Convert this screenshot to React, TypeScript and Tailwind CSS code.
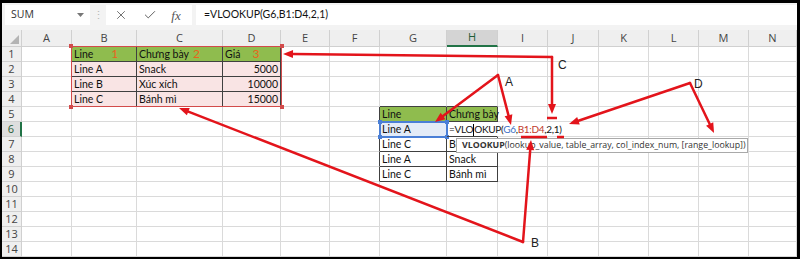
import React from "react";
import { X, Check } from "lucide-react";

const RED = "#e3141b";
const letters = ["A", "B", "C", "D", "E", "F", "G", "H", "I", "J", "K", "L", "M", "N"];
const rows = [1, 2, 3, 4, 5, 6, 7, 8, 9, 10, 11, 12, 13, 14];

type Cell = { t?: React.ReactNode; right?: boolean };

const data: Record<string, Cell> = {
  B1: { t: <>Line<span className="ml-[18px] text-[12px] text-[#e8641c]">1</span></> },
  C1: { t: <>Chưng bày<span className="ml-[4px] text-[12px] text-[#e8641c]">2</span></> },
  D1: { t: <>Giá<span className="ml-[12px] text-[12px] text-[#e8641c]">3</span></> },
  B2: { t: "Line A" },
  C2: { t: "Snack" },
  D2: { t: "5000", right: true },
  B3: { t: "Line B" },
  C3: { t: "Xúc xích" },
  D3: { t: "10000", right: true },
  B4: { t: "Line C" },
  C4: { t: "Bánh mì" },
  D4: { t: "15000", right: true },
  G5: { t: "Line" },
  H5: { t: "Chưng bày" },
  G6: { t: "Line A" },
  H6: {
    t: (
      <span className="text-[10px] tracking-[-0.3px]">
        =VLO<span className="inline-block w-0 h-[12px] border-l border-black align-middle" />OKUP(
        <span className="text-[#3b6fc6]">G6</span>,<span className="text-[#c0392b]">B1:D4</span>,2,1)
      </span>
    ),
  },
  G7: { t: "Line C" },
  H7: { t: <span className="inline-block w-[8px] overflow-hidden align-top">Bánh mì</span> },
  G8: { t: "Line A" },
  H8: { t: "Snack" },
  G9: { t: "Line C" },
  H9: { t: "Bánh mì" },
};

function cellClass(r: number, c: number) {
  const t1 = r >= 1 && r <= 4 && c >= 1 && c <= 3;
  const t2 = r >= 5 && r <= 9 && (c === 6 || c === 7);
  let rc = "border-r-[#dadada]";
  let bc = "border-b-[#dadada]";
  let bg = "";
  if (t1 || t2) {
    rc = "border-r-[#404040]";
    bc = "border-b-[#404040]";
  }
  if (c === 5 && r >= 5 && r <= 9) rc = "border-r-[#404040]";
  if (r === 4 && (c === 6 || c === 7)) bc = "border-b-[#404040]";
  if (r === 6 && (c === 7 || c === 8)) rc = "border-r-transparent";
  if ((t1 && r === 1) || (t2 && r === 5)) bg = "bg-[#8fbc4e]";
  else if (t1) bg = "bg-[#f9e4e4]";
  if (r === 6 && c === 6) bg = "bg-[#e3ebf7]";
  const z = r === 6 && c === 7 ? "relative z-10" : "";
  return `border-r border-b ${rc} ${bc} ${bg} ${z}`;
}

function head(x1: number, y1: number, x2: number, y2: number) {
  const L = 10;
  const W = 8;
  const dx = x2 - x1;
  const dy = y2 - y1;
  const d = Math.hypot(dx, dy);
  const ux = dx / d;
  const uy = dy / d;
  const bx = x2 - ux * L;
  const by = y2 - uy * L;
  const px = (-uy * W) / 2;
  const py = (ux * W) / 2;
  return { bx, by, pts: `${x2},${y2} ${bx + px},${by + py} ${bx - px},${by - py}` };
}

const arrows: [number, number, number, number][] = [
  [552, 57, 283, 54],
  [552, 57, 552, 114],
  [498, 75, 435, 122],
  [498, 75, 511, 125],
  [690, 83, 569, 124],
  [690, 83, 714, 133],
  [523, 242, 179, 108],
  [523, 242, 531, 140],
];

const marks: [number, number, number, number][] = [
  [547, 118, 557, 118],
  [521, 137, 547, 137],
  [557, 137, 564, 137],
];

const labels: [string, number, number][] = [
  ["A", 505, 86],
  ["C", 558, 69],
  ["D", 694, 88],
  ["B", 531, 247],
];

function FormulaBar() {
  return (
    <div className="h-[27px] flex items-start pt-[2px] font-['Open_Sans',sans-serif]">
      <div className="ml-[3px] w-[85px] h-[20px] bg-white flex items-center justify-between pl-[6px] pr-[6px]">
        <span className="text-[10.5px] text-[#333]">SUM</span>
        <svg width="7" height="4" viewBox="0 0 7 4">
          <polygon points="0,0 7,0 3.5,4" fill="#777" />
        </svg>
      </div>
      <div className="w-[16px] h-[20px] flex items-center justify-center text-[#b8b8b8] text-[11px]">⋮</div>
      <div className="w-[86px] h-[20px] bg-white flex items-center text-[#555]">
        <div className="ml-[3px] w-[24px] flex justify-center">
          <X size={14} strokeWidth={1.4} />
        </div>
        <div className="ml-[5px] w-[24px] flex justify-center">
          <Check size={14} strokeWidth={1.6} />
        </div>
        <div className="ml-[2px] w-[24px] flex justify-center font-['Liberation_Serif',serif] italic text-[13px] leading-none">
          fx
        </div>
      </div>
      <div className="ml-[4px] flex-1 h-[20px] bg-white flex items-center pl-[8px] font-['Lato',sans-serif] text-[10.5px] text-[#111]">
        =VLOOKUP(G6,B1:D4,2,1)
      </div>
    </div>
  );
}

function Sheet() {
  return (
    <div className="grid grid-cols-[20px_50px_65px_86px_58px_49px_50px_67px_51px_50px_51px_50px_50px_50px_48px] grid-rows-[17px_repeat(14,15px)] bg-white">
      <div className="border-r border-b border-[#d0d0d0] bg-[#efefef] flex items-end justify-end pr-[2px] pb-[2px]">
        <svg width="9" height="9" viewBox="0 0 9 9">
          <polygon points="9,0 9,9 0,9" fill="#b4b4b4" />
        </svg>
      </div>
      {letters.map((l) => (
        <div
          key={l}
          className={
            l === "H"
              ? "border-r border-r-[#d0d0d0] border-b-2 border-b-[#217346] bg-[#d4d4d4] flex items-center justify-center font-['Open_Sans',sans-serif] text-[11px] text-[#1f5c37]"
              : "border-r border-b border-[#d0d0d0] bg-[#efefef] flex items-center justify-center font-['Open_Sans',sans-serif] text-[11px] text-[#444]"
          }
        >
          {l}
        </div>
      ))}
      {rows.map((r) => (
        <React.Fragment key={r}>
          <div
            className={
              r === 6
                ? "border-r-2 border-r-[#217346] border-b border-b-[#d0d0d0] bg-[#dedede] flex items-center justify-center font-['Open_Sans',sans-serif] text-[11px] text-[#1f5c37]"
                : "border-r border-b border-[#d0d0d0] bg-[#efefef] flex items-center justify-center font-['Open_Sans',sans-serif] text-[11px] text-[#444]"
            }
          >
            {r}
          </div>
          {letters.map((l, c) => {
            const d = data[`${l}${r}`];
            return (
              <div
                key={l}
                className={`${cellClass(r, c)} whitespace-nowrap font-['Lato',sans-serif] text-[10.5px] leading-[14px] text-[#111] ${
                  d?.right ? "text-right pr-[2px]" : "pl-[2px]"
                }`}
              >
                {d?.t}
              </div>
            );
          })}
        </React.Fragment>
      ))}
    </div>
  );
}

export default function App() {
  return (
    <div className="relative w-[800px] h-[259px] bg-black pt-[3px] pl-[2px] pr-[3px] pb-[2px] overflow-hidden">
      <div className="h-full bg-[#f3f3f3] flex flex-col">
        <FormulaBar />
        <Sheet />
      </div>

      {/* range highlights */}
      <div className="absolute left-[71px] top-[46px] w-[211px] h-[61px] border border-[#d24b4b]">
        <div className="absolute -left-[3px] -top-[3px] w-[4px] h-[4px] bg-[#d24b4b]" />
        <div className="absolute -right-[3px] -top-[3px] w-[4px] h-[4px] bg-[#d24b4b]" />
        <div className="absolute -left-[3px] -bottom-[3px] w-[4px] h-[4px] bg-[#d24b4b]" />
        <div className="absolute -right-[3px] -bottom-[3px] w-[4px] h-[4px] bg-[#d24b4b]" />
      </div>
      <div className="absolute left-[379px] top-[121px] w-[69px] h-[17px] border-2 border-[#4a7fd6]">
        <div className="absolute -left-[3px] -top-[3px] w-[4px] h-[4px] bg-[#4a7fd6]" />
        <div className="absolute -right-[3px] -top-[3px] w-[4px] h-[4px] bg-[#4a7fd6]" />
        <div className="absolute -left-[3px] -bottom-[3px] w-[4px] h-[4px] bg-[#4a7fd6]" />
        <div className="absolute -right-[3px] -bottom-[3px] w-[4px] h-[4px] bg-[#4a7fd6]" />
      </div>

      {/* function tooltip */}
      <div className="absolute z-20 left-[456px] top-[138px] w-[292px] h-[15px] bg-white border border-[#a9a9a9] pl-[5px] flex items-center whitespace-nowrap font-['Open_Sans',sans-serif] text-[8.8px] text-[#333]">
        <span className="font-bold">VLOOKUP</span>(lookup_value, table_array, col_index_num, [range_lookup])
      </div>

      {/* annotations */}
      <svg className="absolute inset-0 z-30 pointer-events-none" width="800" height="259">
        {arrows.map(([x1, y1, x2, y2], i) => {
          const h = head(x1, y1, x2, y2);
          return (
            <g key={i}>
              <line x1={x1} y1={y1} x2={h.bx} y2={h.by} stroke={RED} strokeWidth={2.5} strokeLinecap="round" />
              <polygon points={h.pts} fill={RED} />
            </g>
          );
        })}
        {marks.map(([x1, y1, x2, y2], i) => (
          <line key={i} x1={x1} y1={y1} x2={x2} y2={y2} stroke={RED} strokeWidth={2.5} />
        ))}
        {labels.map(([t, x, y]) => (
          <text key={t} x={x} y={y} fontFamily="Liberation Sans, Arial, sans-serif" fontSize="12" fill="#222">
            {t}
          </text>
        ))}
      </svg>
    </div>
  );
}
